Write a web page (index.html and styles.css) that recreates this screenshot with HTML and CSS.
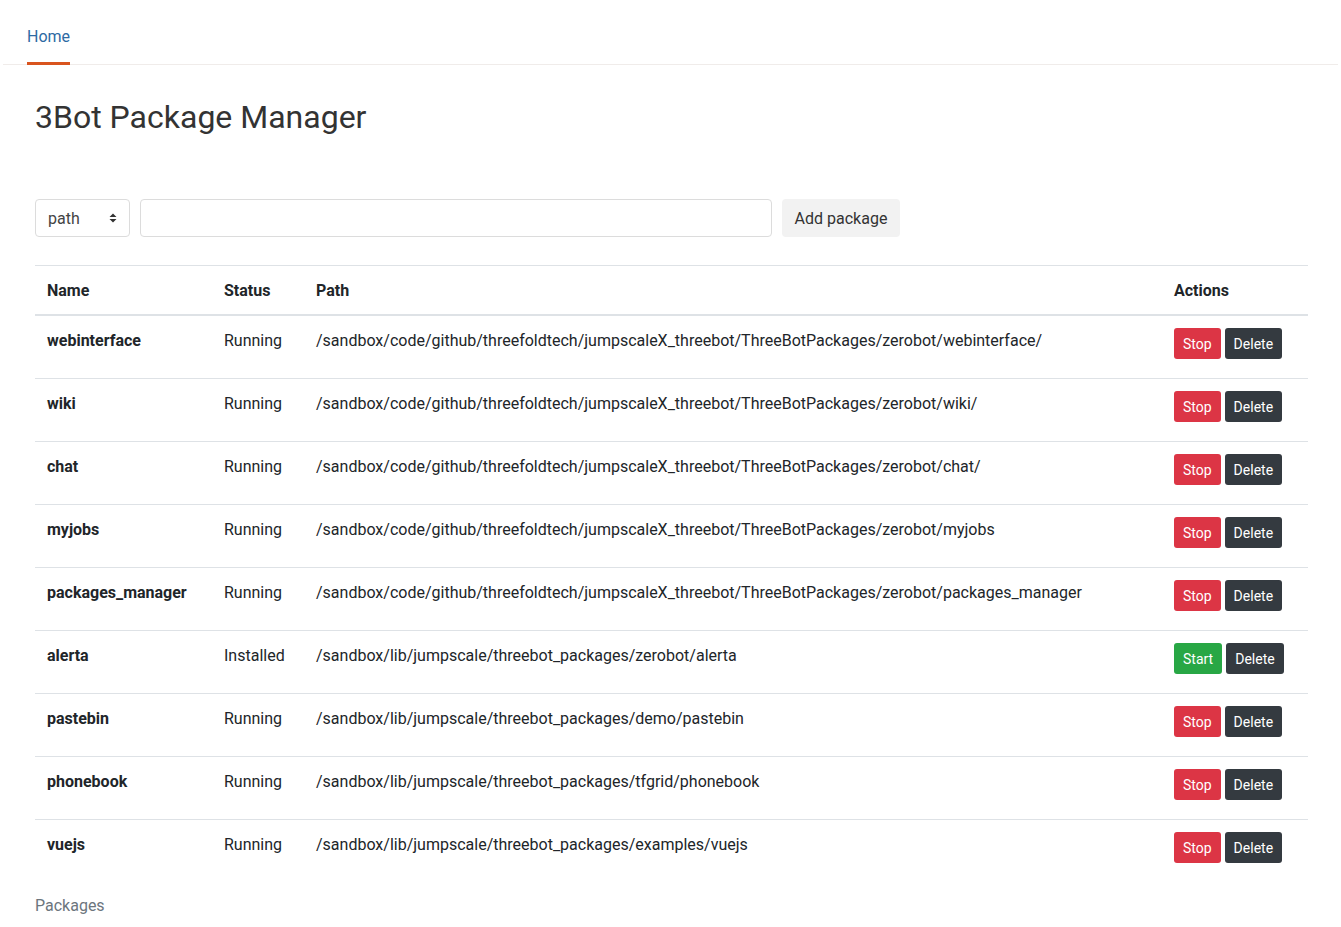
FILE: index.html
```html
<!DOCTYPE html>
<html>
<head>
<meta charset="utf-8">
<link rel="stylesheet" href="styles.css">
</head>
<body>
<nav class="topnav">
  <a class="tab active" href="#">Home</a>
</nav>
<main class="content">
  <h2 class="title">3Bot Package Manager</h2>
  <form class="addform">
    <div class="select"><span>path</span>
      <svg width="8" height="12" viewBox="0 0 8 12"><path d="M4 1.5 L7.5 5 L0.5 5 Z M4 10.5 L7.5 7 L0.5 7 Z" fill="#333"/></svg>
    </div>
    <div class="textinput"></div>
    <button type="button" class="addbtn">Add package</button>
  </form>
  <table class="pkgs">
    <thead>
      <tr><th class="c-name">Name</th><th class="c-status">Status</th><th>Path</th><th class="c-actions">Actions</th></tr>
    </thead>
    <tbody>
      <tr><td class="name">webinterface</td><td>Running</td><td>/sandbox/code/github/threefoldtech/jumpscaleX_threebot/ThreeBotPackages/zerobot/webinterface/</td><td class="acts"><button class="btn red">Stop</button><button class="btn dark">Delete</button></td></tr>
      <tr><td class="name">wiki</td><td>Running</td><td>/sandbox/code/github/threefoldtech/jumpscaleX_threebot/ThreeBotPackages/zerobot/wiki/</td><td class="acts"><button class="btn red">Stop</button><button class="btn dark">Delete</button></td></tr>
      <tr><td class="name">chat</td><td>Running</td><td>/sandbox/code/github/threefoldtech/jumpscaleX_threebot/ThreeBotPackages/zerobot/chat/</td><td class="acts"><button class="btn red">Stop</button><button class="btn dark">Delete</button></td></tr>
      <tr><td class="name">myjobs</td><td>Running</td><td>/sandbox/code/github/threefoldtech/jumpscaleX_threebot/ThreeBotPackages/zerobot/myjobs</td><td class="acts"><button class="btn red">Stop</button><button class="btn dark">Delete</button></td></tr>
      <tr><td class="name">packages_manager</td><td>Running</td><td>/sandbox/code/github/threefoldtech/jumpscaleX_threebot/ThreeBotPackages/zerobot/packages_manager</td><td class="acts"><button class="btn red">Stop</button><button class="btn dark">Delete</button></td></tr>
      <tr><td class="name">alerta</td><td>Installed</td><td>/sandbox/lib/jumpscale/threebot_packages/zerobot/alerta</td><td class="acts"><button class="btn green">Start</button><button class="btn dark">Delete</button></td></tr>
      <tr><td class="name">pastebin</td><td>Running</td><td>/sandbox/lib/jumpscale/threebot_packages/demo/pastebin</td><td class="acts"><button class="btn red">Stop</button><button class="btn dark">Delete</button></td></tr>
      <tr><td class="name">phonebook</td><td>Running</td><td>/sandbox/lib/jumpscale/threebot_packages/tfgrid/phonebook</td><td class="acts"><button class="btn red">Stop</button><button class="btn dark">Delete</button></td></tr>
      <tr><td class="name">vuejs</td><td>Running</td><td>/sandbox/lib/jumpscale/threebot_packages/examples/vuejs</td><td class="acts"><button class="btn red">Stop</button><button class="btn dark">Delete</button></td></tr>
    </tbody>
  </table>
  <footer class="foot">Packages</footer>
</main>
</body>
</html>
```
FILE: styles.css
```css
html, body { margin: 0; padding: 0; background: #fff; }
body { font-family: Roboto, "Noto Sans", sans-serif; font-size: 16px; line-height: 24px; color: #212529; }

.topnav { margin: 0 3px; height: 64px; border-bottom: 1px solid #f0ecea; display: flex; padding-left: 24px; }
.tab { display: block; height: 62px; line-height: 74px; color: #2d6aa3; text-decoration: none; font-size: 16px; border-bottom: 3px solid transparent; }
.tab.active { border-bottom-color: #d9541e; }

.content { padding: 0 33px 0 35px; }
.title { margin: 0; padding-top: 32px; font-size: 32px; line-height: 40px; font-weight: 400; color: #333; }

.addform { display: flex; gap: 10px; margin-top: 62px; height: 38px; }
.select { box-sizing: border-box; width: 95px; height: 38px; border: 1px solid #dcdcdc; border-radius: 4px; display: flex; align-items: center; justify-content: space-between; padding: 2px 12px 0 12px; color: #444; }
.select svg { margin-top: -2px; }
.textinput { box-sizing: border-box; width: 632px; height: 38px; border: 1px solid #dcdcdc; border-radius: 4px; }
.addbtn { box-sizing: border-box; height: 38px; width: 118px; border: none; border-radius: 4px; background: #f2f2f2; font-family: inherit; font-size: 16px; color: #333; padding: 0; }

.pkgs { width: 1273px; border-collapse: collapse; margin-top: 28px; }
.pkgs th, .pkgs td { text-align: left; padding: 13px 12px 11px; vertical-align: top; border-top: 1px solid #dee2e6; }
.pkgs th { font-weight: 700; border-bottom: 2px solid #dee2e6; height: 24px; }
.pkgs td { height: 38px; }
.pkgs td.acts { padding-top: 12px; padding-bottom: 12px; }
.c-name { width: 153px; }
.c-status { width: 68px; }
.c-actions { width: 122px; }
.name { font-weight: 700; }
.acts { white-space: nowrap; }
.btn { display: inline-block; box-sizing: border-box; height: 31px; padding: 1px 9px 0; border: none; border-radius: 3px; font-family: inherit; font-size: 14px; line-height: 30px; color: #fff; margin: 0 4px 0 0; vertical-align: top; }
.btn.red { background: #dc3545; }
.btn.green { background: #28a745; }
.btn.dark { background: #343a40; }

.foot { margin-top: 12px; color: #6c757d; padding-bottom: 20px; }
```
